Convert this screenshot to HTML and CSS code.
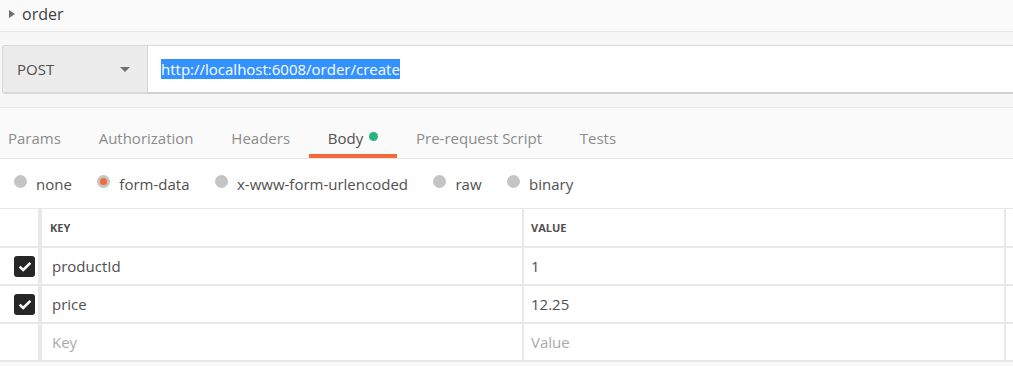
FILE: index.html
```html
<html>
	<head>
		<link rel="stylesheet" href="styles.css">
	</head>
	<body>
		<div class="collection">
			<span class="caret"></span>
			<span class="name">order</span>
		</div>

		<div class="requestBar">
			<div class="method">
				<span>POST</span>
				<span class="arrow"></span>
			</div>
			<div class="url"><span class="selected">http://localhost:6008/order/create</span></div>
		</div>

		<div class="tabs">
			<div class="tab">Params</div>
			<div class="tab">Authorization</div>
			<div class="tab">Headers</div>
			<div class="tab active">Body <span class="dot"></span></div>
			<div class="tab">Pre-request Script</div>
			<div class="tab">Tests</div>
		</div>

		<div class="bodyTypes">
			<label class="radio"><span class="circle"></span>none</label>
			<label class="radio on"><span class="circle"></span>form-data</label>
			<label class="radio"><span class="circle"></span>x-www-form-urlencoded</label>
			<label class="radio"><span class="circle"></span>raw</label>
			<label class="radio"><span class="circle"></span>binary</label>
		</div>

		<div class="params">
			<div class="row head">
				<div class="check"></div>
				<div class="cell key">KEY</div>
				<div class="cell value">VALUE</div>
				<div class="cell end"></div>
			</div>
			<div class="row">
				<div class="check"><span class="box"><svg width="14" height="11" viewBox="0 0 14 11"><path d="M1.6 5.6 L5.2 9 L12.4 1.8" fill="none" stroke="#fff" stroke-width="2.6"/></svg></span></div>
				<div class="cell key">productId</div>
				<div class="cell value">1</div>
				<div class="cell end"></div>
			</div>
			<div class="row">
				<div class="check"><span class="box"><svg width="14" height="11" viewBox="0 0 14 11"><path d="M1.6 5.6 L5.2 9 L12.4 1.8" fill="none" stroke="#fff" stroke-width="2.6"/></svg></span></div>
				<div class="cell key">price</div>
				<div class="cell value">12.25</div>
				<div class="cell end"></div>
			</div>
			<div class="row">
				<div class="check"></div>
				<div class="cell key placeholder">Key</div>
				<div class="cell value placeholder">Value</div>
				<div class="cell end"></div>
			</div>
		</div>
	</body>
</html>
```

FILE: styles.css
```css
html, body {
	margin: 0;
	padding: 0;
	width: 100%;
	height: 100%;
	background: #f7f7f7;
	font-family: "Open Sans", sans-serif;
	color: #505050;
	overflow: hidden;
}

.collection {
	display: flex;
	align-items: center;
	height: 31px;
	padding-left: 9px;
	background: #fafafa;
	border-bottom: 1px solid #e6e6e6;
}

.caret {
	width: 0;
	height: 0;
	border-top: 4.5px solid transparent;
	border-bottom: 4.5px solid transparent;
	border-left: 6px solid #707070;
	margin-right: 7px;
	margin-top: -3px;
}

.name {
	font-size: 16px;
	color: #404040;
	margin-top: -4px;
}

.requestBar {
	display: flex;
	margin: 13px 0 13px 2px;
	height: 49px;
	background: #fafafa;
}

.method {
	display: flex;
	align-items: center;
	justify-content: space-between;
	box-sizing: border-box;
	width: 146px;
	padding: 0 17px 0 14px;
	background: #ececec;
	border: 1px solid #d8d8d8;
	border-bottom-width: 2px;
	border-radius: 3px 0 0 3px;
	font-size: 15px;
	color: #505050;
}

.arrow {
	width: 0;
	height: 0;
	border-left: 5px solid transparent;
	border-right: 5px solid transparent;
	border-top: 5px solid #707070;
}

.url {
	flex: 1;
	display: flex;
	align-items: center;
	padding-left: 13px;
	background: #fff;
	border-top: 1px solid #d8d8d8;
	border-bottom: 2px solid #d0d0d0;
	font-size: 15px;
}

.selected {
	background: #3392ff;
	color: #fff;
	line-height: 20px;
}

.tabs {
	display: flex;
	height: 50px;
	background: #fafafa;
	border-top: 1px solid #e6e6e6;
	border-bottom: 1px solid #e6e6e6;
	padding-left: 8px;
}

.tab {
	display: flex;
	align-items: center;
	padding: 14px 18.9px 0;
	font-size: 15px;
	color: #8c8c8c;
	border-bottom: 4px solid transparent;
}

.tab:first-child {
	padding-left: 0;
}

.tab.active {
	color: #505050;
	border-bottom-color: #f26b3a;
}

.dot {
	display: inline-block;
	width: 9px;
	height: 9px;
	border-radius: 50%;
	background: #26b47f;
	margin-left: 6px;
	margin-top: -3px;
}

.bodyTypes {
	display: flex;
	align-items: center;
	height: 49px;
	padding-left: 14px;
	background: #fff;
	border-bottom: 1px solid #e6e6e6;
}

.radio {
	display: flex;
	align-items: center;
	font-size: 15px;
	color: #505050;
	margin-right: 25.5px;
}

.circle {
	width: 13px;
	height: 13px;
	border-radius: 50%;
	background: #c4c4c4;
	margin-right: 9px;
	margin-top: -4px;
	position: relative;
}

.radio.on .circle::after {
	content: "";
	position: absolute;
	left: 3px;
	top: 3px;
	width: 7px;
	height: 7px;
	border-radius: 50%;
	background: #f26b3a;
}

.params {
	background: #fff;
}

.row {
	display: flex;
	height: 36px;
	border-bottom: 2px solid #e8e8e8;
}

.row.head {
	height: 37px;
}

.check {
	width: 40px;
	display: flex;
	align-items: center;
	padding-left: 14px;
	box-sizing: border-box;
	border-right: 2px solid #e8e8e8;
}

.box {
	display: flex;
	align-items: center;
	justify-content: center;
	width: 21px;
	height: 21px;
	border-radius: 3px;
	background: #262626;
}

.cell {
	display: flex;
	align-items: center;
	box-sizing: border-box;
	padding-left: 8px;
	font-size: 15px;
	border-right: 2px solid #e8e8e8;
}

.key {
	width: 484px;
	padding-left: 10px;
	border-left: 2px solid #e8e8e8;
}

.head .key {
	padding-left: 8px;
}

.value {
	width: 482px;
	padding-left: 7px;
}

.end {
	flex: 1;
	padding: 0;
	border-right: none;
}

.head .cell {
	font-size: 11px;
	font-weight: bold;
	color: #505050;
}

.placeholder {
	color: #aaa;
}
```
